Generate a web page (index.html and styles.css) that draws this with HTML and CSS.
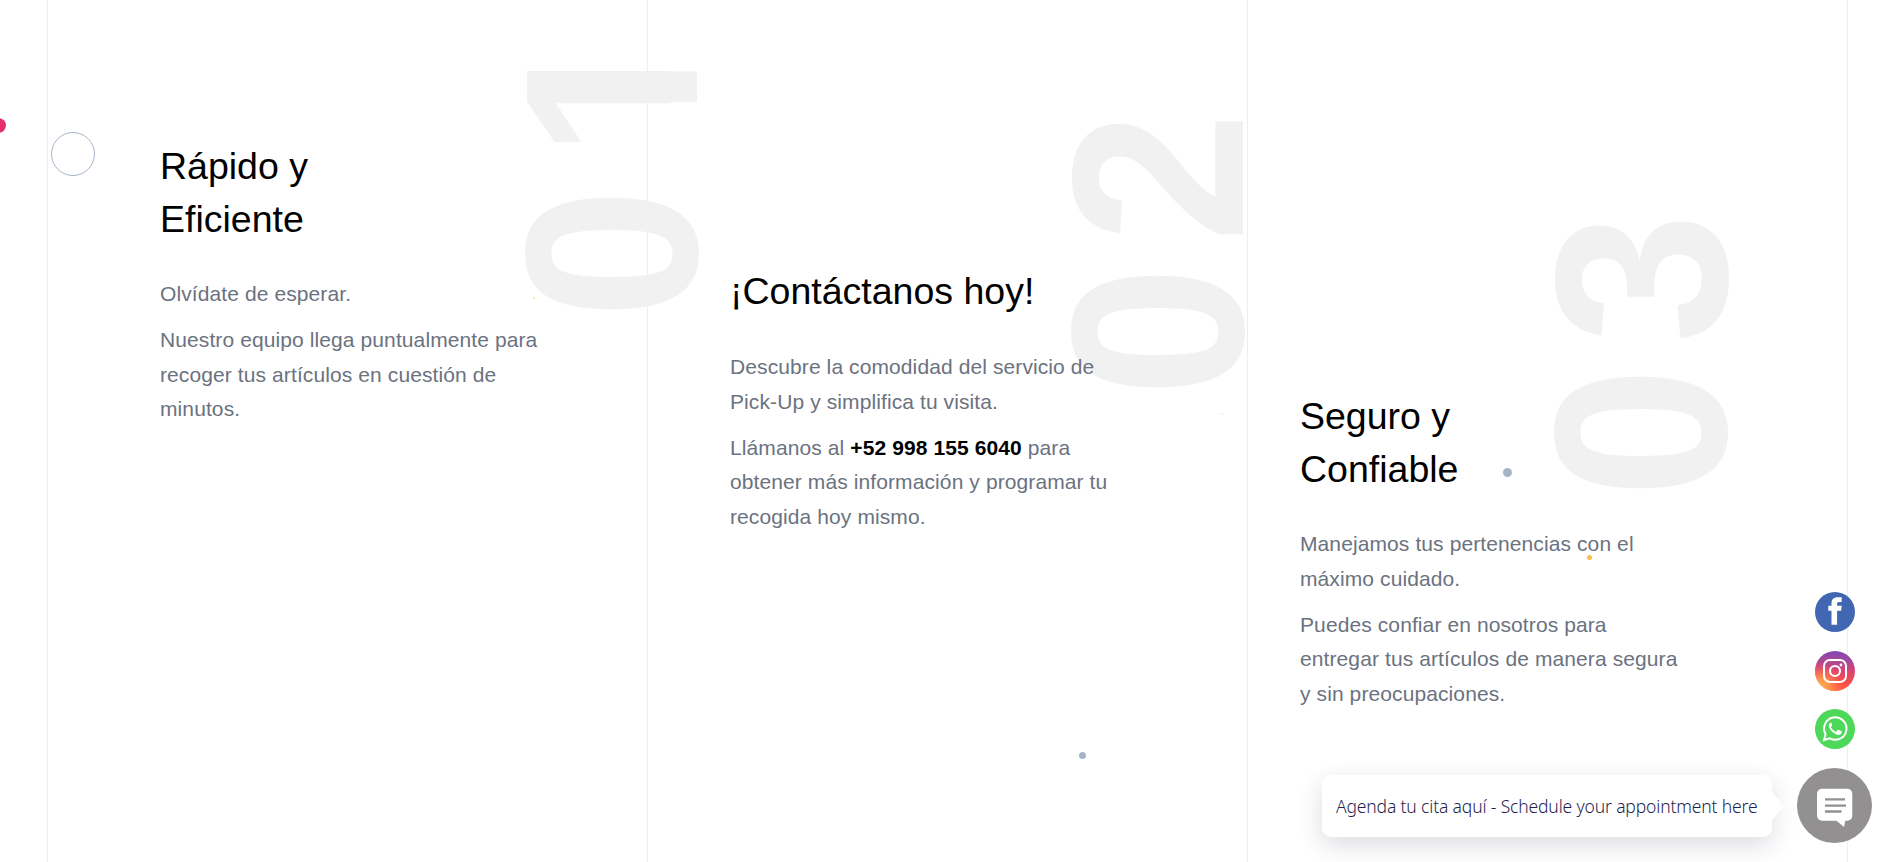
FILE: index.html
```html
<!DOCTYPE html>
<html lang="es">

<head>
    <meta charset="UTF-8">
    <meta name="viewport" content="width=device-width, initial-scale=1.0">
    <title>Servicio de Pick-Up</title>
    <link rel="stylesheet" href="styles.css">
</head>

<body>
    <!-- Líneas verticales de fondo -->
    <div class="lineas">
        <span></span>
        <span></span>
        <span></span>
    </div>

    <main class="pasos">
        <section class="paso paso-1">
            <div class="numero">0<span class="uno">1</span></div>
            <h2>Rápido y<br>Eficiente</h2>
            <p>Olvídate de esperar.</p>
            <p>Nuestro equipo llega puntualmente para<br>recoger tus artículos en cuestión de<br>minutos.</p>
        </section>

        <section class="paso paso-2">
            <div class="numero">02</div>
            <h2>¡Contáctanos hoy!</h2>
            <p>Descubre la comodidad del servicio de<br>Pick-Up y simplifica tu visita.</p>
            <p>Llámanos al <strong>+52 998 155 6040</strong> para<br>obtener más información y programar tu<br>recogida hoy mismo.</p>
        </section>

        <section class="paso paso-3">
            <div class="numero">03</div>
            <h2>Seguro y<br>Confiable</h2>
            <p>Manejamos tus pertenencias con el<br>máximo cuidado.</p>
            <p>Puedes confiar en nosotros para<br>entregar tus artículos de manera segura<br>y sin preocupaciones.</p>
        </section>
    </main>

    <!-- Partículas decorativas -->
    <div class="particulas">
        <i class="punto rosa"></i>
        <i class="punto aro"></i>
        <i class="punto amarillo-mini"></i>
        <i class="punto gris-mini"></i>
        <i class="punto azul-1"></i>
        <i class="punto azul-2"></i>
        <i class="punto amarillo"></i>
    </div>

    <!-- Redes sociales y chat -->
    <aside class="flotante">
        <nav class="redes">
            <a href="#" aria-label="Facebook">
                <svg viewBox="0 0 40 40">
                    <circle cx="20" cy="20" r="20" fill="#4267b2"/>
                    <path fill="#fff" d="M16.5 32.7V18.8h-3.2v-5h3.2v-2.6c0-4 2.3-6 6.2-6h4v4.7h-2.6c-1.5 0-2 .7-2 2v1.9h4.6l-.6 5h-4v13.9z"/>
                </svg>
            </a>
            <a href="#" aria-label="Instagram">
                <svg viewBox="0 0 40 40">
                    <defs>
                        <linearGradient id="ig-base" x1="0.55" y1="0" x2="0.5" y2="1">
                            <stop offset="0" stop-color="#8344b4"/>
                            <stop offset="0.22" stop-color="#a04a9c"/>
                            <stop offset="0.5" stop-color="#dc4470"/>
                            <stop offset="0.8" stop-color="#fb4b45"/>
                            <stop offset="1" stop-color="#ff6a45"/>
                        </linearGradient>
                        <radialGradient id="ig-luz" cx="0.12" cy="0.9" r="0.6">
                            <stop offset="0" stop-color="#ffb84f"/>
                            <stop offset="0.4" stop-color="#ffa04c" stop-opacity="0.8"/>
                            <stop offset="1" stop-color="#ff6a45" stop-opacity="0"/>
                        </radialGradient>
                    </defs>
                    <circle cx="20" cy="20" r="20" fill="url(#ig-base)"/>
                    <circle cx="20" cy="20" r="20" fill="url(#ig-luz)"/>
                    <rect x="9" y="9" width="22" height="22" rx="6" fill="none" stroke="#fff" stroke-width="2"/>
                    <circle cx="20" cy="20" r="5" fill="none" stroke="#fff" stroke-width="2.1"/>
                    <circle cx="26" cy="14" r="1.4" fill="#fff"/>
                </svg>
            </a>
            <a href="#" aria-label="WhatsApp">
                <svg viewBox="0 0 40 40">
                    <circle cx="20" cy="20" r="20" fill="#4dd85a"/>
                    <path fill="none" stroke="#fff" stroke-width="2" d="M9 31l1.6-5.8A11.2 11.2 0 1 1 14.9 29.4z"/>
                    <path fill="#fff" d="M16.3 13.7c-.4-.3-1 0-1.4.4-1.6 1.7-1.2 4 .3 6.1 1.9 2.7 4.4 4.9 7.4 5.7 1.7.4 3.5-.6 4-2.2.2-.6.2-1.2-.1-1.4l-2.9-1.5c-.5-.2-.8 0-1.1.4l-1 1.3c-.3.3-.6.3-1 .1-2-.9-3.4-2.2-4.4-4-.2-.4-.1-.7.2-1l.7-.9c.2-.3.2-.6.1-.9z"/>
                </svg>
            </a>
        </nav>

        <div class="chat">
            <div class="globo">Agenda tu cita aquí - Schedule your appointment here</div>
            <button class="btn-chat" aria-label="Abrir chat">
                <svg viewBox="0 0 75 75">
                    <path fill="#fff" d="M25 20.7h25.3a5 5 0 0 1 5 5v22a5 5 0 0 1-5 5h-2L47 59 39.5 52.7H25a5 5 0 0 1-5-5v-22a5 5 0 0 1 5-5z"/>
                    <path stroke="#929091" stroke-width="2.3" d="M28 31.3h20M28 37.6h21M28 43.5h16.5"/>
                </svg>
            </button>
        </div>
    </aside>
</body>

</html>
```

FILE: styles.css
```css
body {
    font-family: Arial, "Liberation Sans", sans-serif;
    margin: 0;
    background-color: #fff;
    height: 862px;
    position: relative;
    overflow: hidden;
}

.lineas {
    position: absolute;
    top: 0;
    bottom: 0;
    left: 47px;
    display: grid;
    grid-template-columns: repeat(3, 600px);
    border-left: 1px solid #eee;
}

.lineas span {
    box-sizing: border-box;
    border-right: 1px solid #eee;
}

.pasos {
    display: grid;
    grid-template-columns: repeat(3, 570px);
    padding-left: 160px;
}

.paso {
    position: relative;
}

.paso-1 {
    padding-top: 140px;
}

.paso-2 {
    padding-top: 265px;
}

.paso-3 {
    padding-top: 390px;
}

.paso h2 {
    position: relative;
    margin: 0 0 31px;
    font-size: 37.5px;
    font-weight: normal;
    line-height: 53px;
    color: #000;
}

.paso-2 h2 {
    margin-bottom: 32px;
}

.paso p {
    position: relative;
    margin: 0 0 11px;
    font-size: 21px;
    line-height: 34.8px;
    color: #6b7280;
    letter-spacing: 0.1px;
    white-space: nowrap;
}

.paso strong {
    color: #000;
}

.numero {
    position: absolute;
    writing-mode: vertical-rl;
    transform: rotate(180deg) scale(1.018, 0.978);
    font-size: 240px;
    font-weight: bold;
    line-height: 1;
    letter-spacing: 24px;
    color: #f1f1f1;
}

/* el 1 va sin la base */
.uno {
    display: inline-block;
    transform: translateY(7px) scaleX(1.01);
    transform-origin: 37px 0;
    clip-path: polygon(0 57px, 63px 57px, 63px 0, 100% 0, 100% 100%, 63px 100%, 63px 88px, 0 88px);
}

.paso-1 .numero {
    left: 333px;
    top: 7px;
}

.paso-2 .numero {
    left: 309px;
    top: 85px;
}

.paso-3 .numero {
    left: 222px;
    top: 186px;
}

/* partículas */
.punto {
    position: absolute;
    border-radius: 50%;
}

.rosa {
    left: -9px;
    top: 118px;
    width: 15px;
    height: 15px;
    background-color: #e72e6d;
}

.aro {
    left: 51px;
    top: 132px;
    width: 42px;
    height: 42px;
    border: 1px solid #a9b7c9;
}

.amarillo-mini {
    left: 533px;
    top: 297px;
    width: 2px;
    height: 2px;
    background-color: #ffdf9c;
}

.gris-mini {
    left: 1221px;
    top: 413px;
    width: 2px;
    height: 2px;
    background-color: #ececf0;
}

.azul-1 {
    left: 1503px;
    top: 468px;
    width: 9px;
    height: 9px;
    background-color: #a6b4c7;
}

.azul-2 {
    left: 1079px;
    top: 752px;
    width: 7px;
    height: 7px;
    background-color: #a6b4c7;
}

.amarillo {
    left: 1587px;
    top: 555px;
    width: 5px;
    height: 5px;
    background-color: #ffbf43;
}

/* botones flotantes */
.flotante {
    position: absolute;
    right: 15px;
    bottom: 19px;
    display: flex;
    flex-direction: column;
    align-items: flex-end;
}

.redes {
    display: flex;
    flex-direction: column;
    gap: 18.5px;
    margin: 0 17px 19px 0;
}

.redes a,
.redes svg {
    display: block;
    width: 40px;
    height: 40px;
}

.chat {
    display: flex;
    align-items: center;
    gap: 25px;
}

.globo {
    position: relative;
    box-sizing: border-box;
    width: 450px;
    height: 62px;
    padding: 0 14px;
    border-radius: 9px;
    background-color: #fff;
    box-shadow: 0 8px 24px rgba(35, 30, 75, 0.16);
    font-family: "Noto Sans", "Open Sans", sans-serif;
    font-size: 17.5px;
    font-weight: 300;
    line-height: 63px;
    letter-spacing: -0.15px;
    color: #1f1f50;
    white-space: nowrap;
}

.globo::after {
    content: "";
    position: absolute;
    right: -12px;
    top: 17px;
    border-left: 12px solid #fff;
    border-top: 14px solid transparent;
    border-bottom: 14px solid transparent;
}

.btn-chat {
    width: 75px;
    height: 75px;
    padding: 0;
    border: none;
    border-radius: 50%;
    background-color: #929091;
    cursor: pointer;
}

.btn-chat svg {
    display: block;
}
```
